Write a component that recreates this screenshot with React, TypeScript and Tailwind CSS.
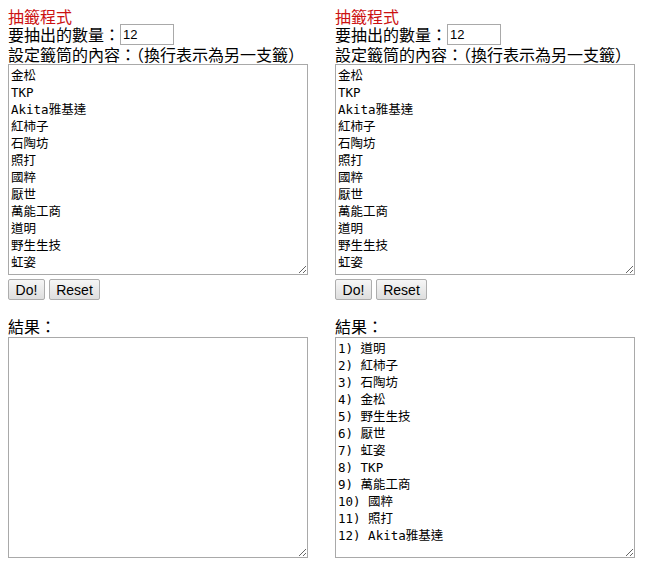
import { useState } from 'react';

const DEFAULT_LOTS = ['金松', 'TKP', 'Akita雅基達', '紅柿子', '石陶坊', '照打', '國粹', '厭世', '萬能工商', '道明', '野生生技', '虹姿'];

const PICKED = ['道明', '紅柿子', '石陶坊', '金松', '野生生技', '厭世', '虹姿', 'TKP', '萬能工商', '國粹', '照打', 'Akita雅基達'];

const bodyFont = { fontFamily: '"Noto Sans CJK TC", "Noto Sans", sans-serif' };
const monoFont = { fontFamily: '"DejaVu Sans Mono", "Noto Sans CJK TC", monospace' };
const btnFont = { fontFamily: '"Liberation Sans", Arial, sans-serif' };

function LotPanel({ result }: { result: string }) {
  const [count, setCount] = useState('12');
  const [lots, setLots] = useState(DEFAULT_LOTS.join('\n'));
  const [out, setOut] = useState(result);

  return (
    <div className="flex w-[300px] flex-col text-[16px] text-black" style={bodyFont}>
      <div className="h-[16px] leading-[16px] text-[#cc1111]">抽籤程式</div>
      <div className="flex h-[20px] items-center whitespace-nowrap leading-[20px]">
        <span>要抽出的數量：</span>
        <input
          value={count}
          onChange={(e) => setCount(e.target.value)}
          className="h-[21px] w-[54px] border border-[#a9a9a9] bg-white px-[2px] text-[13px] outline-none"
          style={btnFont}
        />
      </div>
      <div className="mt-[1px] h-[19px] whitespace-nowrap leading-[19px]">設定籤筒的內容：（換行表示為另一支籤）</div>
      <textarea
        value={lots}
        onChange={(e) => setLots(e.target.value)}
        spellCheck={false}
        className="mt-[0px] h-[211px] w-[300px] border border-[#a9a9a9] bg-white p-[2px] text-[12.5px] leading-[17px] outline-none"
        style={monoFont}
      />
      <div className="mt-[4px] flex gap-[4px]">
        <button
          onClick={() => {
            const arr = lots.split('\n').filter(Boolean);
            const n = Math.min(parseInt(count) || 0, arr.length);
            setOut(arr.slice(0, n).map((s, i) => `${i + 1}) ${s}`).join('\n'));
          }}
          className="h-[21px] w-[37px] rounded-[2px] border border-[#adadad] bg-gradient-to-b from-[#f6f6f6] to-[#dedede] text-[14px] text-black"
          style={btnFont}
        >
          Do!
        </button>
        <button
          onClick={() => setOut('')}
          className="h-[21px] w-[51px] rounded-[2px] border border-[#adadad] bg-gradient-to-b from-[#f6f6f6] to-[#dedede] text-[14px] text-black"
          style={btnFont}
        >
          Reset
        </button>
      </div>
      <div className="mt-[17px] h-[19px] leading-[19px]">結果：</div>
      <textarea
        value={out}
        onChange={(e) => setOut(e.target.value)}
        spellCheck={false}
        className="mt-[1px] h-[221px] w-[300px] border border-[#a9a9a9] bg-white p-[2px] text-[12.5px] leading-[17px] outline-none"
        style={monoFont}
      />
    </div>
  );
}

export default function App() {
  return (
    <div className="flex min-h-[570px] gap-[27px] bg-white pl-[8px] pt-[8px]">
      <LotPanel result="" />
      <LotPanel result={PICKED.map((s, i) => `${i + 1}) ${s}`).join('\n')} />
    </div>
  );
}
